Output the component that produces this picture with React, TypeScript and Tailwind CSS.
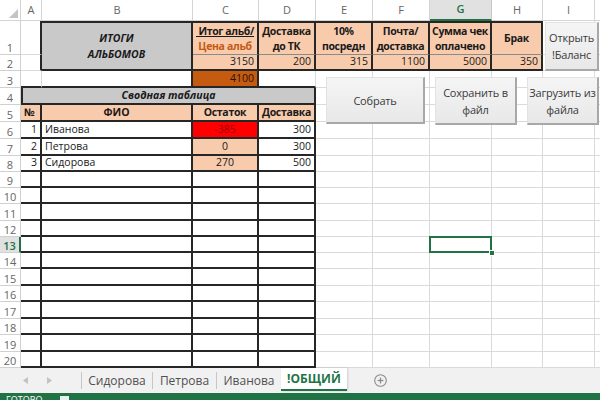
import React from 'react';

type Side = 'g' | 'k' | 'm' | 'n';

const RB: Record<Side, string> = {
  g: 'border-r border-r-[#dadada]',
  k: 'border-r-2 border-r-[#262626]',
  m: 'border-r border-r-[#808080]',
  n: '',
};
const BB: Record<Side, string> = {
  g: 'border-b border-b-[#dadada]',
  k: 'border-b-2 border-b-[#262626]',
  m: 'border-b border-b-[#8a8a8a]',
  n: '',
};

function Cell({
  r = 'g',
  b = 'g',
  t = false,
  l = false,
  className = '',
  children,
}: {
  r?: Side;
  b?: Side;
  t?: boolean;
  l?: boolean;
  className?: string;
  children?: React.ReactNode;
}) {
  return (
    <div
      className={`flex items-center overflow-hidden whitespace-nowrap px-[3px] ${RB[r]} ${BB[b]} ${
        t ? 'border-t-2 border-t-[#262626]' : ''
      } ${l ? 'border-l-2 border-l-[#262626]' : ''} ${className}`}
    >
      {children}
    </div>
  );
}

function RowHead({ n }: { n: number }) {
  if (n === 13) {
    return (
      <div className="flex items-end justify-center pb-[1px] bg-[#e1e1e1] text-[#217346] font-semibold border-r-2 border-r-[#217346] border-b border-b-[#d0d0d0] text-[11px] leading-none">
        {n}
      </div>
    );
  }
  return (
    <div className="flex items-end justify-center pb-[1px] text-[#666] border-r border-r-[#d0d0d0] border-b border-b-[#d0d0d0] text-[11px] leading-none">
      {n}
    </div>
  );
}

function ColHead({ l, active = false }: { l: string; active?: boolean }) {
  if (active) {
    return (
      <div className="flex items-center justify-center bg-[#e1e1e1] text-[#217346] font-semibold border-r border-r-[#c8c8c8] border-b-2 border-b-[#217346] text-[11px]">
        {l}
      </div>
    );
  }
  return (
    <div className="flex items-center justify-center text-[#666] border-r border-r-[#d4d4d4] border-b border-b-[#d4d4d4] text-[11px]">
      {l}
    </div>
  );
}

function Rest({ row }: { row: number }) {
  return (
    <>
      <Cell />
      <Cell />
      {row === 13 ? (
        <Cell className="relative overflow-visible">
          <div className="absolute left-[-1px] top-[-1px] right-[-1px] bottom-[-1px] border-2 border-[#217346] z-10" />
          <div className="absolute right-[-4px] bottom-[-4px] w-[6px] h-[6px] bg-[#217346] border border-white z-10" />
        </Cell>
      ) : (
        <Cell />
      )}
      <Cell />
      <Cell />
      <Cell />
    </>
  );
}

const PEACH = 'bg-[#f8cbad]';
const HEAD = 'bg-[#f8cbad] justify-center text-center font-bold leading-[15px] tracking-[-0.35px]';

const people = [
  { n: '1', name: 'Иванова', ost: '-385', d: '300', bg: 'bg-[#ff0000] text-[#9c0006]' },
  { n: '2', name: 'Петрова', ost: '0', d: '300', bg: 'bg-[#f8cbad]' },
  { n: '3', name: 'Сидорова', ost: '270', d: '500', bg: 'bg-[#f8cbad]' },
];

const btn =
  'absolute z-20 flex items-center justify-center text-center text-[11px] tracking-[-0.2px] leading-[17px] text-[#3a3a3a] whitespace-nowrap bg-linear-to-b from-[#f5f5f5] to-[#e8e8e8] border-t border-l border-t-[#e2e2e2] border-l-[#e2e2e2] border-r-2 border-b-2 border-r-[#a8a8a8] border-b-[#a8a8a8]';

export default function App() {
  const emptyRows = [9, 10, 11, 12, 13, 14, 15, 16, 17, 18, 19, 20];
  return (
    <div className="relative w-[600px] h-[400px] overflow-hidden bg-white flex flex-col font-['Open_Sans',sans-serif] text-[10.5px] text-[#1a1a1a]">
      <div className="grid shrink-0 grid-cols-[21px_21px_151px_66px_57px_57px_57px_62px_51px_52px_40px] grid-rows-[21px_34px_16px_17px_17px_17px_17px_17px_16px_16px_16px_17px_16px_16px_16px_17px_16px_17px_16px_17px_16px] h-[368px] w-[635px]">
        {/* header row */}
        <div className="relative border-r border-r-[#d4d4d4] border-b border-b-[#d4d4d4]">
          <svg className="absolute right-[2px] bottom-[2px]" width="9" height="9" viewBox="0 0 9 9">
            <polygon points="9,0 9,9 0,9" fill="#c4c4c4" />
          </svg>
        </div>
        <ColHead l="A" />
        <ColHead l="B" />
        <ColHead l="C" />
        <ColHead l="D" />
        <ColHead l="E" />
        <ColHead l="F" />
        <ColHead l="G" active />
        <ColHead l="H" />
        <ColHead l="I" />
        <ColHead l="" />

        {/* row 1 */}
        <RowHead n={1} />
        <Cell r="k" />
        <Cell
          t
          r="k"
          b="k"
          className="row-span-2 bg-[#c9c9c9] justify-center text-center font-bold italic leading-[16px] whitespace-normal"
        >
          <div>
            ИТОГИ
            <br />
            АЛЬБОМОВ
          </div>
        </Cell>
        <Cell t r="k" b="m" className={HEAD}>
          <div>
            <span className="underline">&nbsp;Итог альб/</span>
            <br />
            <span className="text-[#c65911]">Цена альб</span>
          </div>
        </Cell>
        <Cell t r="k" b="m" className={HEAD}>
          <div>
            Доставка
            <br />
            до ТК
          </div>
        </Cell>
        <Cell t r="k" b="m" className={HEAD}>
          <div>
            10%
            <br />
            посредн
          </div>
        </Cell>
        <Cell t r="k" b="m" className={HEAD}>
          <div>
            Почта/
            <br />
            доставка
          </div>
        </Cell>
        <Cell t r="k" b="m" className={HEAD}>
          <div>
            Сумма чек
            <br />
            оплачено
          </div>
        </Cell>
        <Cell t r="k" b="m" className={HEAD}>
          Брак
        </Cell>
        <Cell />
        <Cell />

        {/* row 2 */}
        <RowHead n={2} />
        <Cell r="k" />
        <Cell r="k" b="k" className={`${PEACH} justify-end`}>3150</Cell>
        <Cell r="k" b="k" className={`${PEACH} justify-end`}>200</Cell>
        <Cell r="k" b="k" className={`${PEACH} justify-end`}>315</Cell>
        <Cell r="k" b="k" className={`${PEACH} justify-end`}>1100</Cell>
        <Cell r="k" b="k" className={`${PEACH} justify-end`}>5000</Cell>
        <Cell r="k" b="k" className={`${PEACH} justify-end`}>350</Cell>
        <Cell />
        <Cell />

        {/* row 3 */}
        <RowHead n={3} />
        <Cell b="k" />
        <Cell r="k" b="k" />
        <Cell r="k" b="k" className="bg-[#c55a11] justify-end text-[#2a1204]">4100</Cell>
        <Cell b="k" />
        <Rest row={3} />

        {/* row 4 */}
        <RowHead n={4} />
        <Cell l r="k" b="k" className="col-span-4 bg-[#c9c9c9] justify-center font-bold italic">
          Сводная таблица
        </Cell>
        <Rest row={4} />

        {/* row 5 */}
        <RowHead n={5} />
        <Cell r="k" b="k" className={`${PEACH} font-bold`}>№</Cell>
        <Cell r="k" b="k" className={`${PEACH} font-bold justify-center`}>ФИО</Cell>
        <Cell r="k" b="k" className={`${PEACH} font-bold justify-center tracking-[-0.3px]`}>Остаток</Cell>
        <Cell r="k" b="k" className={`${PEACH} font-bold justify-center tracking-[-0.3px]`}>Доставка</Cell>
        <Rest row={5} />

        {people.map((p, i) => (
          <React.Fragment key={p.n}>
            <RowHead n={6 + i} />
            <Cell r="k" b="k" className="justify-end">{p.n}</Cell>
            <Cell r="k" b="k">{p.name}</Cell>
            <Cell r="k" b="k" className={`${p.bg} justify-center`}>{p.ost}</Cell>
            <Cell r="k" b="k" className="justify-end">{p.d}</Cell>
            <Rest row={6 + i} />
          </React.Fragment>
        ))}

        {emptyRows.map((n) => (
          <React.Fragment key={n}>
            <RowHead n={n} />
            <Cell r="k" b="k" />
            <Cell r="k" b="k" />
            <Cell r="k" b="k" />
            <Cell r="k" b="k" />
            <Rest row={n} />
          </React.Fragment>
        ))}
      </div>

      {/* sheet tabs */}
      <div className="h-[25px] shrink-0 bg-[#f1f1f1] flex items-stretch text-[12px] text-[#505050]">
        <div className="w-[82px] flex items-center pl-[23px] gap-[19px] my-[4px] border-r border-r-[#c6c6c6]">
          <svg width="5" height="7" viewBox="0 0 5 7">
            <polygon points="5,0 5,7 0,3.5" fill="#c2c2c2" />
          </svg>
          <svg width="5" height="7" viewBox="0 0 5 7">
            <polygon points="0,0 0,7 5,3.5" fill="#c2c2c2" />
          </svg>
        </div>
        <div className="w-[71px] flex items-center justify-center my-[4px] border-r border-r-[#c6c6c6]">Сидорова</div>
        <div className="w-[64px] flex items-center justify-center my-[4px] border-r border-r-[#c6c6c6]">Петрова</div>
        <div className="w-[64px] flex items-center justify-center my-[4px]">Иванова</div>
        <div className="w-[66px] flex items-center justify-center bg-white text-[#217346] font-bold mb-[2px] border-b-2 border-b-[#217346] shadow-[1px_0_2px_rgba(0,0,0,0.15)]">
          !ОБЩИЙ
        </div>
        <div className="ml-[27px] flex items-center">
          <svg width="13" height="13" viewBox="0 0 13 13">
            <circle cx="6.5" cy="6.5" r="5.8" fill="none" stroke="#8a8a8a" strokeWidth="1.1" />
            <line x1="6.5" y1="3.6" x2="6.5" y2="9.4" stroke="#8a8a8a" strokeWidth="1.3" />
            <line x1="3.6" y1="6.5" x2="9.4" y2="6.5" stroke="#8a8a8a" strokeWidth="1.3" />
          </svg>
        </div>
      </div>

      {/* status bar */}
      <div className="h-[22px] shrink-0 bg-[#217346] flex items-start pt-[2px] pl-[6px] gap-[18px] text-white text-[9px] leading-none">
        <span>ГОТОВО</span>
        <span className="mt-[1px] w-[9px] h-[9px] bg-[#e8f2ec]" />
      </div>

      {/* form buttons */}
      <div className={`${btn} left-[545px] top-[22px] w-[54px] h-[49px]`}>
        Открыть
        <br />
        !Баланс
      </div>
      <div className={`${btn} left-[326px] top-[77px] w-[99px] h-[47px]`}>Собрать</div>
      <div className={`${btn} left-[435px] top-[77px] w-[82px] h-[48px]`}>
        Сохранить в
        <br />
        файл
      </div>
      <div className={`${btn} left-[527px] top-[77px] w-[72px] h-[48px]`}>
        Загрузить из
        <br />
        файла
      </div>
    </div>
  );
}
